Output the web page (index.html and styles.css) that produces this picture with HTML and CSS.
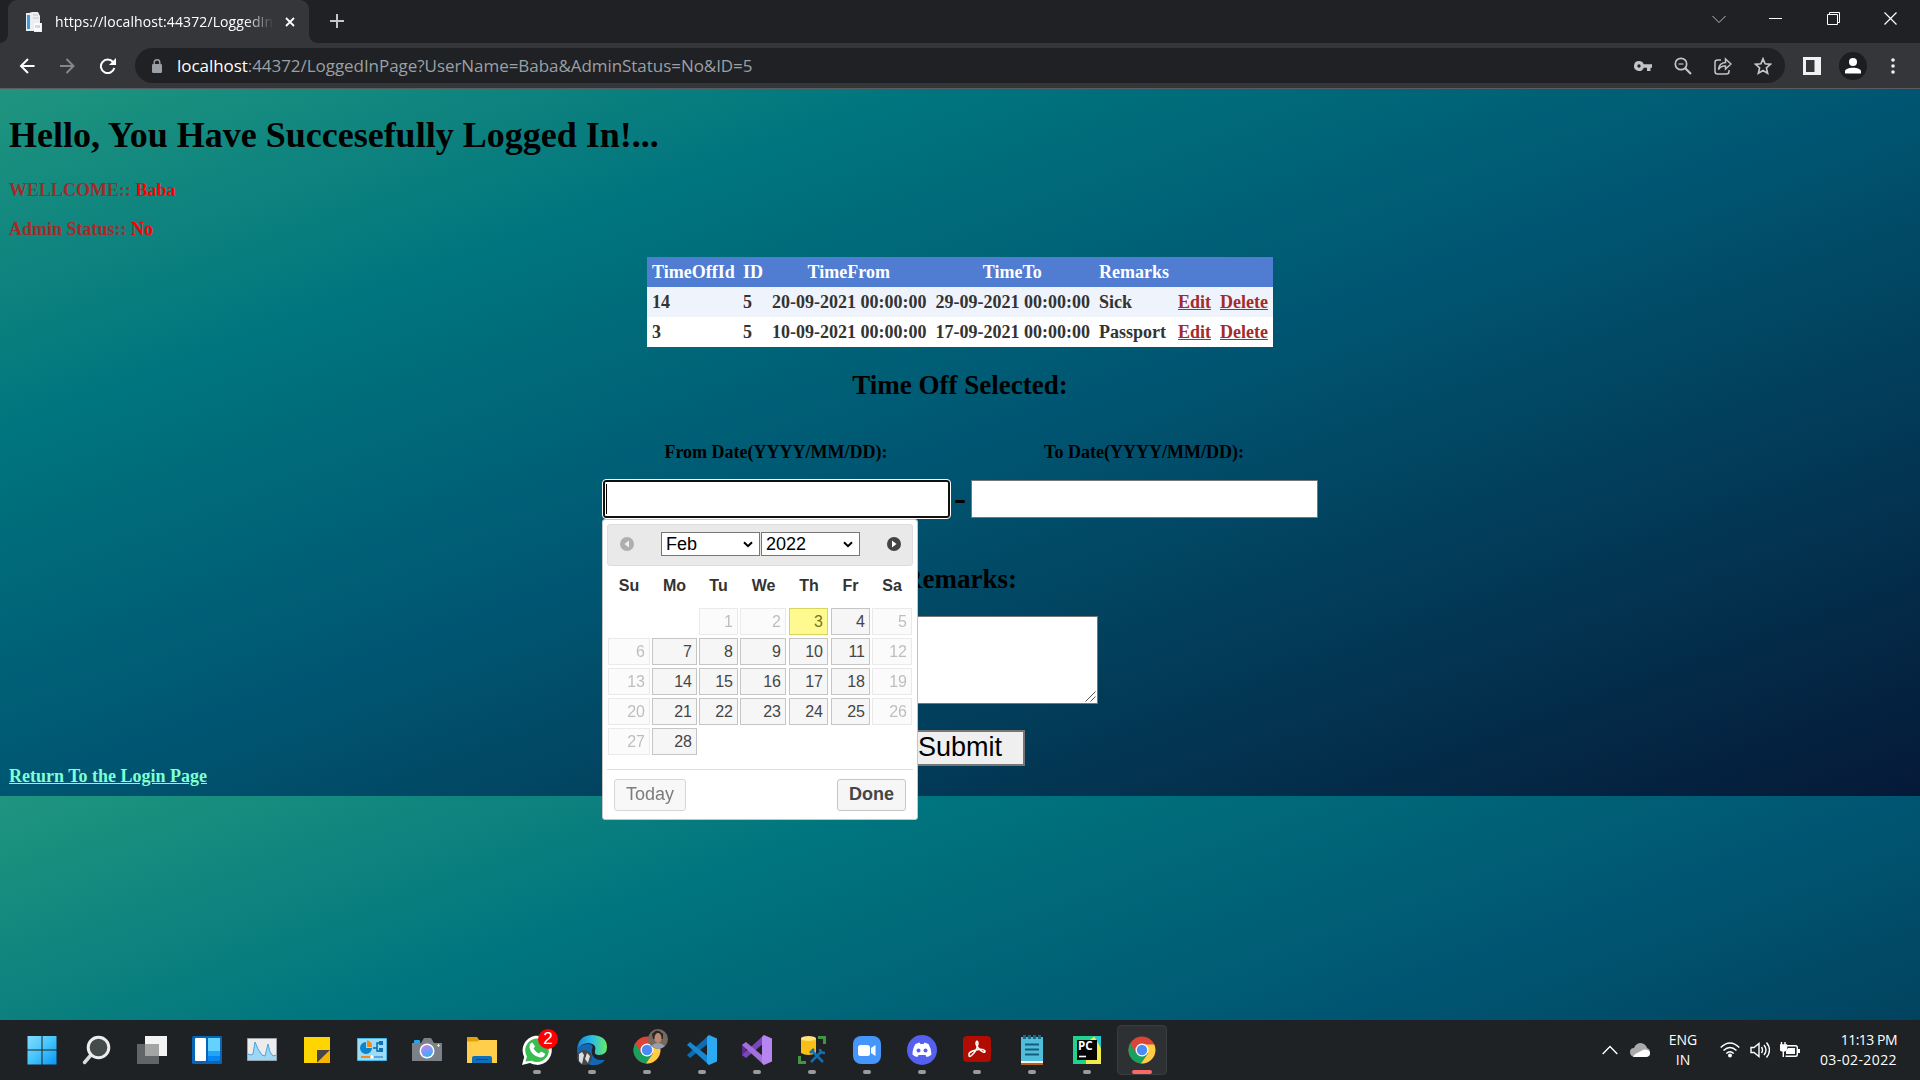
FILE: index.html
```html
<!DOCTYPE html>
<html lang="en">
<head>
<meta charset="utf-8">
<title>LoggedInPage</title>
<link rel="stylesheet" href="styles.css">
</head>
<body>
<header class="browser">
  <div class="tabstrip">
    <div class="tab">
      <svg class="favicon" width="18" height="20" viewBox="0 0 18 20"><path d="M1 1h3l3-1h6l2 4v7h2v9H9v-1H1z" fill="#eceff1"/><path d="M2 3h3v14H2z" fill="#3f9bd8"/><path d="M8 3h5M8 6h6" stroke="#c7ccd0"/><path d="M9 11h7v8H9z" fill="#fbfbfb"/><path d="M10 13h5v3h-5z" fill="#d4d9dd"/></svg>
      <span class="tab-title">https://localhost:44372/LoggedIn</span>
      <svg class="tab-close" width="10" height="10" viewBox="0 0 10 10"><path d="M1 1l8 8M9 1l-8 8" stroke="#fff" stroke-width="1.8"/></svg>
    </div>
    <svg class="newtab" width="14" height="14" viewBox="0 0 14 14"><path d="M7 0v14M0 7h14" stroke="#c4c7c9" stroke-width="2"/></svg>
    <div class="window-controls">
      <svg width="14" height="14" viewBox="0 0 14 14"><path d="M.5 4L7 10.500l6.500-6.500" fill="none" stroke="#bbb"/></svg>
      <svg width="14" height="14" viewBox="0 0 14 14"><path d="M0 6.500h13" stroke="#fff"/></svg>
      <svg width="14" height="14" viewBox="0 0 14 14"><path d="M.5 2.500h10v10H.5zM2.500 2.500v-2h10v10h-2" fill="none" stroke="#fff"/></svg>
      <svg width="14" height="14" viewBox="0 0 14 14"><path d="M.5.5l12 12M12.500.5l-12 12" stroke="#fff" stroke-width="1.200"/></svg>
    </div>
  </div>
  <div class="toolbar">
    <div class="nav">
      <svg width="16" height="16" viewBox="0 0 16 16"><path d="M15.500 8H2.500M9 1L2 8l7 7" fill="none" stroke="#fff" stroke-width="2"/></svg>
      <svg width="16" height="16" viewBox="0 0 16 16"><path d="M1 8h13M7.500 1l7 7-7 7" fill="none" stroke="#85878a" stroke-width="2"/></svg>
      <svg width="18" height="16" viewBox="0 0 18 16"><path d="M14 4A6.800 6.800 0 1 0 15.300 10" fill="none" stroke="#fff" stroke-width="2"/><path d="M17 0v7h-7z" fill="#fff"/></svg>
    </div>
    <div class="omnibox">
      <svg width="10" height="14" viewBox="0 0 10 14"><rect y="5" width="10" height="9" rx="1.200" fill="#9aa0a6"/><path d="M2.200 5.500V3.500a2.800 2.800 0 0 1 5.600 0v2" fill="none" stroke="#9aa0a6" stroke-width="1.400"/></svg>
      <span class="url"><b>localhost</b>:44372/LoggedInPage?UserName=Baba&amp;AdminStatus=No&amp;ID=5</span>
      <div class="page-actions">
        <svg width="18" height="18" viewBox="0 0 18 18"><path d="M5 4a5 5 0 1 0 4.700 6.700H13V14h3.500v-3.300H18V7.300H9.700A5 5 0 0 0 5 4zm0 3.300a1.700 1.700 0 1 1 0 3.400 1.700 1.700 0 0 1 0-3.400z" fill="#c2c4c6"/></svg>
        <svg width="18" height="18" viewBox="0 0 18 18"><circle cx="7" cy="7" r="5.700" fill="none" stroke="#c2c4c6" stroke-width="1.700"/><path d="M11 11l6 6" stroke="#c2c4c6" stroke-width="2.200"/><path d="M4.500 7h5" stroke="#c2c4c6" stroke-width="1.200"/></svg>
        <svg width="18" height="18" viewBox="0 0 18 18"><path d="M7 3H3.500Q1 3 1 5.500v9Q1 17 3.500 17h9q2.500 0 2.500-2.500V13M4.500 12.500Q5 6 11.500 5.500V2L17 7l-5.500 5V9Q7 8.500 4.500 12.500z" fill="none" stroke="#c2c4c6" stroke-width="1.500"/></svg>
        <svg width="18" height="18" viewBox="0 0 18 18"><path d="M9 1.800l2.100 5 5.400.5-4.100 3.600 1.200 5.300L9 13.400l-4.600 2.800 1.200-5.300-4.100-3.600 5.400-.5z" fill="none" stroke="#c2c4c6" stroke-width="1.700"/></svg>
      </div>
    </div>
    <div class="extras">
      <svg width="18" height="18" viewBox="0 0 18 18"><path d="M0 0h18v18H0zM3 3v12h8.500V3z" fill="#f1f1f1" fill-rule="evenodd"/></svg>
      <svg width="28" height="28" viewBox="0 0 28 28"><circle cx="14" cy="14" r="14" fill="#1c1d20"/><circle cx="14" cy="10" r="4" fill="#fff"/><path d="M6 21.500v-2C6 14.500 22 14.500 22 19.500v2z" fill="#fff"/></svg>
      <svg width="4" height="16" viewBox="0 0 4 16"><circle cx="2" cy="2" r="1.800" fill="#f1f1f1"/><circle cx="2" cy="8" r="1.800" fill="#f1f1f1"/><circle cx="2" cy="14" r="1.800" fill="#f1f1f1"/></svg>
    </div>
  </div>
</header>

<main class="viewport">
  <h1 class="greeting">Hello, You Have Succesefully Logged In!...</h1>
  <p class="info">WELLCOME:: <span>Baba</span></p>
  <p class="info">Admin Status:: <span>No</span></p>

  <table class="grid">
    <colgroup><col class="c-toid"><col class="c-id"><col class="c-date"><col class="c-date"><col class="c-rem"><col class="c-edit"><col class="c-del"></colgroup>
    <tr class="head"><th>TimeOffId</th><th>ID</th><th class="mid">TimeFrom</th><th class="mid">TimeTo</th><th>Remarks</th><th></th><th></th></tr>
    <tr class="alt"><td>14</td><td>5</td><td>20-09-2021 00:00:00</td><td>29-09-2021 00:00:00</td><td>Sick</td><td><a>Edit</a></td><td><a>Delete</a></td></tr>
    <tr><td>3</td><td>5</td><td>10-09-2021 00:00:00</td><td>17-09-2021 00:00:00</td><td>Passport</td><td><a>Edit</a></td><td><a>Delete</a></td></tr>
  </table>

  <h2 class="selected">Time Off Selected:</h2>

  <section class="dates">
    <div class="field">
      <div class="caption">From Date(YYYY/MM/DD):</div>
      <div class="input focused"><i class="caret"></i></div>
      <div class="picker">
        <div class="picker-head">
          <svg class="arrow off" width="14" height="14" viewBox="0 0 14 14"><circle cx="7" cy="7" r="7" fill="#444"/><path d="M9 3.500v7L4.500 7z" fill="#fff"/></svg>
          <div class="selects">
            <div class="select">Feb<svg width="10" height="7" viewBox="0 0 10 7"><path d="M1 1.200l4 4 4-4" fill="none" stroke="#000" stroke-width="2"/></svg></div>
            <div class="select">2022<svg width="10" height="7" viewBox="0 0 10 7"><path d="M1 1.200l4 4 4-4" fill="none" stroke="#000" stroke-width="2"/></svg></div>
          </div>
          <svg class="arrow" width="14" height="14" viewBox="0 0 14 14"><circle cx="7" cy="7" r="7" fill="#444"/><path d="M5 3.500v7L9.500 7z" fill="#fff"/></svg>
        </div>
        <div class="week names"><b>Su</b><b>Mo</b><b>Tu</b><b>We</b><b>Th</b><b>Fr</b><b>Sa</b></div>
        <div class="week"><i></i><i></i><span class="off">1</span><span class="off">2</span><span class="now">3</span><span>4</span><span class="off">5</span></div>
        <div class="week"><span class="off">6</span><span>7</span><span>8</span><span>9</span><span>10</span><span>11</span><span class="off">12</span></div>
        <div class="week"><span class="off">13</span><span>14</span><span>15</span><span>16</span><span>17</span><span>18</span><span class="off">19</span></div>
        <div class="week"><span class="off">20</span><span>21</span><span>22</span><span>23</span><span>24</span><span>25</span><span class="off">26</span></div>
        <div class="week"><span class="off">27</span><span>28</span></div>
        <div class="picker-foot"><div class="btn today">Today</div><div class="btn done">Done</div></div>
      </div>
    </div>
    <div class="dash">-</div>
    <div class="field">
      <div class="caption">To Date(YYYY/MM/DD):</div>
      <div class="input"></div>
    </div>
  </section>

  <h2 class="remarks-title">Remarks:</h2>
  <div class="remarks"><svg width="11" height="11" viewBox="0 0 11 11"><path d="M.5 10.500l10-10M5.500 10.500l5-5" stroke="#555"/></svg></div>
  <div class="submit">Submit</div>
  <a class="return">Return To the Login Page</a>
</main>

<footer class="taskbar">
  <div class="apps">
    <div class="app"><svg width="30" height="30" viewBox="0 0 30 30"><defs><linearGradient id="win" x2="1" y2="1"><stop stop-color="#85dcff"/><stop offset=".5" stop-color="#45c4fb"/><stop offset="1" stop-color="#0a94fa"/></linearGradient></defs><path d="M.5 1H14.500v13.500H.5zM15.500 1H29.500v13.500H15.500zM.5 15.500h14V29.500H.5zM15.500 15.500H29.500V29.500H15.500z" fill="url(#win)"/></svg></div>
    <div class="app"><svg width="30" height="30" viewBox="0 0 30 30"><path d="M9 20l-6.500 7.500" stroke="#d8dadb" stroke-width="3.500" stroke-linecap="round"/><circle cx="16.500" cy="12.500" r="10.300" fill="#454a4b" stroke="#eceded" stroke-width="3"/></svg></div>
    <div class="app"><svg width="30" height="30" viewBox="0 0 30 30"><path d="M8 1h22v20H8z" fill="#f3f3f3"/><path d="M0 9h22v20H0z" fill="#626465"/><path d="M8 9h14v12H8z" fill="#a3a4a4"/></svg></div>
    <div class="app"><svg width="30" height="30" viewBox="0 0 30 30"><rect y="1" width="30" height="28" rx="1.500" fill="#0864b5"/><rect x="3" y="3" width="11" height="23" rx="1" fill="#fff"/><path d="M16 3h12v13H16z" fill="#63d2ff"/><path d="M16 16h12v5H16z" fill="#20a5fb"/><path d="M16 21h12v5H16z" fill="#0786ee"/></svg></div>
    <div class="app"><svg width="30" height="30" viewBox="0 0 30 30"><path d="M.5 3.500h29v22H.5z" fill="#ececef" stroke="#9ca3a8"/><path d="M1 19l3 1 2-1 2-12 3 7 4 6 3 1 3-12 2 8 3 4 3-1v5H1z" fill="#9ed6f6"/><path d="M1 19l3 1 2-1 2-12 3 7 4 6 3 1 3-12 2 8 3 4 3-1" fill="none" stroke="#4ba3d8"/></svg></div>
    <div class="app"><svg width="30" height="30" viewBox="0 0 30 30"><path d="M2 2h26v13L16 28H2z" fill="#ffd500"/><path d="M15 15h13L15 28z" fill="#454545"/><path d="M28 15v13H15z" fill="#f5b400"/></svg></div>
    <div class="app"><svg width="30" height="30" viewBox="0 0 30 30"><path d="M.5 3.500h29v22H.5z" fill="#9bdcf8" stroke="#48b5e8"/><path d="M9 7a6 6 0 1 0 6 6H9z" fill="#0c83cc"/><path d="M10 5a7 7 0 0 1 5 7h-5z" fill="#f38b12"/><path d="M16 13h4V8h5M20 13v3h5" fill="none" stroke="#14659c" stroke-width="1.500"/><path d="M22 6h4v4h-4zM22 13h4v4h-4z" fill="#1470b4"/><path d="M4 22h10" stroke="#f38b12" stroke-width="2"/><path d="M15 22h11" stroke="#1470b4"/><circle cx="15" cy="22" r="1.800" fill="#fff"/></svg></div>
    <div class="app"><svg width="30" height="30" viewBox="0 0 30 30"><defs><linearGradient id="lens" x2=".5" y2="1"><stop stop-color="#d47df0"/><stop offset="1" stop-color="#3aaef5"/></linearGradient></defs><rect x="2" y="5" width="6" height="4" rx="1" fill="#23a7e8"/><path d="M0 8h9l3-5h7l3 5h8v18H0z" fill="#7b8187"/><circle cx="15" cy="16" r="7.500" fill="#fff"/><circle cx="15" cy="16" r="6" fill="url(#lens)"/><path d="M26.500 9v3M25 10.500h3" stroke="#ddd"/></svg></div>
    <div class="app"><svg width="30" height="30" viewBox="0 0 30 30"><path d="M0 2h10l3 4v4H0z" fill="#e5a007"/><path d="M0 6.500h10L12.500 5H30v23H0z" fill="#ffce4b"/><path d="M5 28v-5q0-2 2-2h16q2 0 2 2v5z" fill="#106fb8"/><path d="M9 24.500h12" stroke="#0a4e89"/></svg></div>
    <div class="app run"><svg width="30" height="30" viewBox="0 0 30 30"><path d="M0 30l2.200-8A14.600 14.600 0 1 1 8 28z" fill="#fff"/><path d="M3.500 26.500l1.500-5a11.800 11.800 0 1 1 4.500 4.200z" fill="#3abd50"/><path d="M8.500 8.500l2-1 2.500 4-1.500 2q2 3.500 5.500 5l2-2 4 2q0 4-5 4-9-2-10.500-10 0-3 1-4z" fill="#fff"/></svg><span class="badge">2</span></div>
    <div class="app run"><svg width="30" height="30" viewBox="0 0 30 30"><defs><linearGradient id="edge" x2="1"><stop stop-color="#1686d3"/><stop offset=".5" stop-color="#29bde6"/><stop offset="1" stop-color="#6bea62"/></linearGradient></defs><path d="M0 15Q1 0 16 0q14 1 14 12 0 8-8 8-5 0-4-4 2-7-6-8Q4 8 0 15z" fill="url(#edge)"/><path d="M0 15Q4 8 12 9q5 1 3 5-2 12 13 11-5 6-14 5Q0 27 0 15z" fill="#1268b6"/><circle cx="7.500" cy="22.500" r="7.500" fill="#44484a"/><path d="M2 19l3-2 2 3-2 9-3-3zM10 18l3 3-2 7-3-4z" fill="#ddd"/></svg></div>
    <div class="app run"><svg width="30" height="30" viewBox="0 0 30 30"><use href="#chrome"/></svg><svg class="avatar" width="20" height="20" viewBox="0 0 20 20"><circle cx="10" cy="10" r="10" fill="#756961"/><path d="M4 5Q9-2 15 5v5H5z" fill="#2b2523"/><ellipse cx="10" cy="9" rx="3.500" ry="5" fill="#bb8a72"/><path d="M3 17q7-6 14 0-6 6-14 0z" fill="#94a0ae"/></svg></div>
    <div class="app run"><svg width="30" height="30" viewBox="0 0 30 30"><path d="M22 0v8L3 23l-3-3z" fill="#0a6db5"/><path d="M0 10l3-3 19 15v8z" fill="#1687d0"/><path d="M22 0l8 3.500v23L22 30l-2-2V2z" fill="#2ba9f2"/></svg></div>
    <div class="app run"><svg width="30" height="30" viewBox="0 0 30 30"><path d="M0 10l4-3v16l-4-3z" fill="#5b2a94"/><path d="M22 0v8L4 23l-4-3z" fill="#7b45bb"/><path d="M0 10l4-3 18 15v8z" fill="#a270dc"/><path d="M22 0l8 3.500v23L22 30l-2-2V2z" fill="#b685f0"/></svg></div>
    <div class="app run"><svg width="30" height="30" viewBox="0 0 30 30"><path d="M4 3v15q7 4 15 0V3z" fill="#f9bf16"/><ellipse cx="11.500" cy="3.500" rx="7.500" ry="2.500" fill="#ffe27a"/><path d="M21 2.500h6.500V9M2.500 21v6.500H9" fill="none" stroke="#419646" stroke-width="3"/><path d="M14 27l11-11M16 17l10 10M13 18l4-4M23 14q0 4 5 4" fill="none" stroke="#126eb5" stroke-width="2.500"/></svg></div>
    <div class="app run"><svg width="30" height="30" viewBox="0 0 30 30"><rect x="1" y="1" width="28" height="28" rx="8" fill="#4596fb"/><rect x="6" y="10" width="12" height="11" rx="2.500" fill="#fff"/><path d="M19 13l4.500-3v11L19 18z" fill="#fff"/></svg></div>
    <div class="app run"><svg width="30" height="30" viewBox="0 0 30 30"><circle cx="15" cy="15" r="15" fill="#5560ee"/><path d="M8.500 9l4-1.500 1 1.500h3l1-1.500 4 1.500q3 5 3 10.500-2 2-5 2.500l-1-2h-7l-1 2q-3-.5-5-2.500 0-6 3-10.500z" fill="#fff"/><circle cx="11.500" cy="15.500" r="2" fill="#5560ee"/><circle cx="18.500" cy="15.500" r="2" fill="#5560ee"/></svg></div>
    <div class="app run"><svg width="30" height="30" viewBox="0 0 30 30"><rect x="1" y="1" width="28" height="26" rx="4" fill="#b10c02"/><path d="M7 20q-1-3 7-5 7-2 9 1 0 3-5-1-4-4-4-7 1-4 2 0-1 8-6 12-3 3-3 0z" fill="none" stroke="#fff" stroke-width="1.600"/></svg></div>
    <div class="app run"><svg width="30" height="30" viewBox="0 0 30 30"><path d="M4 2h22v24H4z" fill="#50bddd"/><path d="M4 26h22v2H4z" fill="#f2f2f2"/><path d="M4 28h22v2H4z" fill="#b85f18"/><path d="M8 9.500h14M8 14.500h14M8 19.500h14" stroke="#155e7b" stroke-width="2"/><path d="M7.500 0v4M12.500 0v4M17.500 0v4M22.500 0v4" stroke="#176b88" stroke-width="3"/></svg></div>
    <div class="app run"><svg width="30" height="30" viewBox="0 0 30 30"><path d="M1 1h28v28H1z" fill="#20d28e"/><path d="M16 1h9l4 12V1z" fill="#16a9d6"/><path d="M14 8l9-7 6 12v16H14z" fill="#f0ed4a"/><path d="M22 1h7v12z" fill="#21c8d4"/><path d="M5 5h20v20H5z" fill="#050505"/><path d="M7 21.500h7" stroke="#fff" stroke-width="1.600"/></svg><span class="pc">PC</span></div>
    <div class="app run active"><svg width="30" height="30" viewBox="0 0 30 30"><g id="chrome"><circle cx="15" cy="15" r="13.500" fill="#dc4437"/><path d="M3.300 8.200A13.500 13.500 0 0 0 14 28.500l7-10L15 15l-6 3z" fill="#18a05e"/><path d="M14 28.500A13.500 13.500 0 0 0 27.200 9.500H15l6 9z" fill="#ffce43"/><circle cx="15" cy="15" r="6.500" fill="#fff"/><circle cx="15" cy="15" r="5.200" fill="#4b8bf5"/></g></svg></div>
  </div>
  <div class="tray">
    <svg class="t-up" width="16" height="10" viewBox="0 0 16 10"><path d="M.7 9L8 1.500 15.300 9" fill="none" stroke="#fff" stroke-width="1.400"/></svg>
    <svg class="t-cloud" width="20" height="14" viewBox="0 0 20 14"><path d="M0 9q0-4 4-4 2-5 7-5 5 1 6 5 3 1 3 4 0 5-4 5H4q-4-1-4-5z" fill="#aaa"/><path d="M3 13.500q2-3 7-5l4-2q6 0 6 4 0 3-4 3.500H4z" fill="#fff"/></svg>
    <div class="lang">ENG<br>IN</div>
    <svg class="t-wifi" width="20" height="16" viewBox="0 0 20 16"><path d="M.7 5.500Q10-3.500 19.300 5.500M3.500 8.500q6.500-6 13 0M6.300 11.500q3.700-3.500 7.400 0" fill="none" stroke="#fff" stroke-width="1.500"/><circle cx="10" cy="13.500" r="2" fill="#fff"/></svg>
    <svg class="t-vol" width="20" height="18" viewBox="0 0 20 18"><path d="M1 6.500h3l5-4v13l-5-4H1zM11.500 6q2 3 0 6M14 4q4 5 0 10M16.500 1.500q6 7.500 0 15" fill="none" stroke="#fff" stroke-width="1.400"/></svg>
    <svg class="t-bat" width="20" height="17" viewBox="0 0 20 17"><path d="M7 3.700h8.500q1.800 0 1.800 1.800v7q0 1.800-1.800 1.800H5.500" fill="none" stroke="#fff" stroke-width="1.400"/><path d="M8 6h7v6H6V9zM17.500 7H20v4h-2.500z" fill="#fff"/><path d="M1.500 0v3M5 0v3M0 3h6.500v3q0 3-3.200 3Q0 9 0 6zM3.300 8v7" fill="#fff" stroke="#fff" stroke-width="1.400"/></svg>
    <div class="clock"><span class="time">11:13 PM</span><br><span class="date">03-02-2022</span></div>
  </div>
</footer>
</body>
</html>
```
FILE: styles.css
```css
* { box-sizing: border-box; }
body { margin: 0; width: 1920px; height: 1080px; overflow: hidden; display: flex; flex-direction: column; font-family: "Liberation Serif", serif; }
svg { display: block; flex: none; }

.browser { height: 89px; background: #35363a; border-bottom: 1px solid #5b5c5f; font-family: "Open Sans", "Noto Sans", sans-serif; flex: none; }
.tabstrip { height: 43px; background: #202124; display: flex; padding-left: 8px; }
.tab { position: relative; flex: none; width: 301px; height: 43px; background: #35363a; border-radius: 9px 9px 0 0; display: flex; align-items: center; padding-left: 17px; }
.tab::before, .tab::after { content: ""; position: absolute; bottom: 0; width: 8px; height: 8px; }
.tab::before { left: -8px; background: radial-gradient(circle at 0 0, #202124 7.500px, #35363a 8px); }
.tab::after { right: -8px; background: radial-gradient(circle at 100% 0, #202124 7.500px, #35363a 8px); }
.tab-title { flex: none; margin-left: 12px; width: 220px; overflow: hidden; white-space: nowrap; color: #fff; font-size: 14px; letter-spacing: .1px; -webkit-mask-image: linear-gradient(90deg, #000 190px, transparent 219px); mask-image: linear-gradient(90deg, #000 190px, transparent 219px); }
.tab-close { margin-left: 10px; }
.newtab { margin: 14px 0 0 21px; }
.window-controls { margin-left: auto; display: flex; gap: 43.500px; padding: 12px 22px 0 0; }
.toolbar { height: 45px; display: flex; align-items: center; padding-left: 19px; }
.nav { flex: none; width: 116px; display: flex; gap: 24px; }
.omnibox { flex: none; width: 1650px; height: 35px; border-radius: 18px; background: #202124; display: flex; align-items: center; padding: 0 13px 0 17px; }
.url { margin-left: 15px; font-size: 17px; letter-spacing: -.05px; color: #9aa0a6; white-space: nowrap; }
.url b { font-weight: 400; color: #fff; }
.page-actions { margin-left: auto; display: flex; gap: 22px; }
.extras { display: flex; align-items: center; gap: 18px; margin-left: 18px; }
.extras svg:last-child { margin-left: 6px; }

.viewport { flex: none; height: 931px; padding: 0 8px; background: linear-gradient(to bottom right, #1f957f, #00747e 25%, #005672 50%, #051937) 0 0 / 1920px 707px; display: flex; flex-direction: column; align-items: center; font-weight: 700; }
.greeting { align-self: flex-start; margin: 26px 0 0 1px; font-size: 36px; line-height: 41px; }
.info { align-self: flex-start; margin: 24px 0 0 1px; font-size: 18px; line-height: 20px; color: brown; }
.info + .info { margin-top: 19px; }
.info span { color: red; }
.grid { margin-top: 18px; width: 626px; border-collapse: collapse; table-layout: fixed; background: #fff; font-size: 18px; color: #333; }
.grid tr { height: 30px; }
.grid th, .grid td { padding: 0 5px; text-align: left; white-space: nowrap; line-height: 20px; }
.grid .mid { text-align: center; }
.head { background: #507cd1; color: #fff; }
.alt { background: #eff3fb; }
.grid a { color: brown; text-decoration: underline; }
.c-toid { width: 91px; } .c-id { width: 29px; } .c-date { width: 163.500px; } .c-rem { width: 79px; } .c-edit { width: 42px; } .c-del { width: 58px; }
.selected { margin: 22px 0 0; font-size: 27px; line-height: 32px; }

.dates { display: flex; align-items: flex-end; margin-top: 40px; height: 117px; }
.field { position: relative; width: 347px; height: 77px; display: flex; flex-direction: column; align-items: center; justify-content: space-between; align-self: flex-start; }
.caption { font-size: 18px; line-height: 22px; }
.input { width: 347px; height: 38px; background: #fff; border: 1px solid #767676; }
.input.focused { border: 2px solid #101010; border-radius: 3px; outline: 1px solid #fff; padding: 2px 1px; }
.caret { display: block; width: 1px; height: 30px; background: #000; }
.dash { width: 21px; margin-bottom: 44px; text-align: center; font-size: 36px; line-height: 32px; }
.remarks-title { margin: 5px 0 0; font-size: 27px; line-height: 32px; }
.remarks { width: 275px; height: 88px; margin-top: 21px; background: #fff; border: 1px solid #767676; display: flex; align-items: flex-end; justify-content: flex-end; padding: 1px; flex: none; }
.submit { width: 129px; height: 36px; margin-top: 26px; background: #efefef; border: 2px solid #767676; font: 27px/31px "Liberation Sans", sans-serif; text-align: center; color: #000; flex: none; }
.return { align-self: flex-start; margin-left: 1px; font-size: 18px; line-height: 20px; color: aquamarine; text-decoration: underline; }

.picker { position: absolute; left: -.5px; top: 78px; z-index: 2; width: 316px; height: 301px; padding: 4px; background: #fff; border: 1px solid #c5c5c5; border-radius: 3px; font-family: "Liberation Sans", sans-serif; font-weight: 400; color: #333; }
.picker-head { height: 42px; background: #e9e9e9; border: 1px solid #ddd; border-radius: 3px; display: flex; align-items: center; justify-content: space-between; padding: 0 11px 2px 12px; }
.arrow.off { opacity: .35; }
.selects { display: flex; gap: 1px; }
.select { width: 99px; height: 24px; background: #fff; border: 1px solid #767676; color: #000; font: 18px/22px "Liberation Sans", sans-serif; display: flex; align-items: center; justify-content: space-between; padding: 0 6px 0 4px; }
.week { display: grid; grid-template-columns: 42px 45px 39px 47px 40px 39px 40px; column-gap: 2px; height: 30px; margin-left: 1px; }
.week span { height: 27px; border: 1px solid #c5c5c5; background: #f6f6f6; color: #454545; font-size: 16px; line-height: 25px; padding-right: 4px; text-align: right; }
.week span:nth-child(4), .week span:nth-child(5) { margin-right: 1px; }
.week .off { opacity: .35; }
.week .now { background: #fffa90; border-color: #dad55e; color: #777620; }
.names { height: 42px; text-align: center; font-size: 16px; }
.names b { line-height: 39px; }
.picker-foot { height: 50px; margin-top: 11px; border-top: 1px solid #ddd; display: flex; justify-content: space-between; padding: 9px 7px; }
.btn { height: 32px; border: 1px solid #c5c5c5; border-radius: 3px; background: #f6f6f6; color: #454545; font-size: 18px; line-height: 28px; text-align: center; }
.today { width: 72px; opacity: .7; }
.done { width: 69px; font-weight: 700; }

.taskbar { height: 60px; flex: none; background: #1e2224; display: flex; justify-content: space-between; color: #fff; font-family: "Open Sans", "Noto Sans", sans-serif; }
.apps { display: flex; gap: 5px; padding: 5px 0 0 17px; }
.app { position: relative; width: 50px; height: 50px; display: flex; align-items: center; justify-content: center; border-radius: 4px; }
.active { background: #2e3133; border: 1px solid #3a3d3f; }
.run::after { content: ""; position: absolute; bottom: 1px; left: 21px; width: 8px; height: 4px; border-radius: 2px; background: #9a9b9c; }
.active::after { left: 14px; width: 20px; bottom: 0; background: #f66a63; }
.badge { position: absolute; left: 26px; top: 4px; width: 20px; height: 20px; border-radius: 50%; background: #f00; font: 17px/20px "Liberation Sans", sans-serif; text-align: center; }
.avatar { position: absolute; left: 26px; top: 4px; }
.pc { position: absolute; left: 16px; top: 15px; font: 700 11.500px/12px "Open Sans", sans-serif; }
.tray { display: flex; align-items: center; padding-right: 23px; }
.t-cloud { margin-left: 12px; }
.lang { width: 48px; margin-left: 9px; text-align: center; font-size: 14px; line-height: 20px; }
.t-wifi { margin-left: 13px; } .t-vol { margin-left: 10px; } .t-bat { margin-left: 10px; }
.clock { width: 97px; text-align: right; font-size: 14px; line-height: 20px; white-space: nowrap; }
.time { letter-spacing: -.5px; }
.date { letter-spacing: .4px; }
```
